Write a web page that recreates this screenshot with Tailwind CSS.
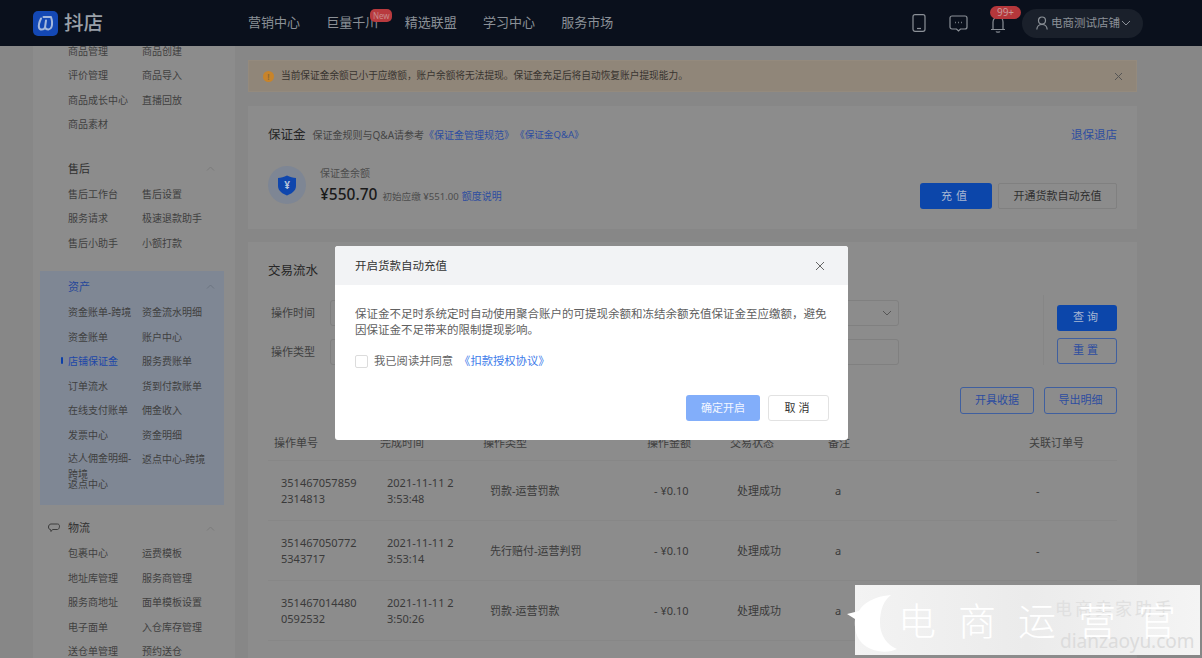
<!DOCTYPE html>
<html lang="zh-CN">
<head>
  <meta charset="UTF-8">
  <title>抖店 - 保证金</title>
  <script src="https://cdn.jsdelivr.net/npm/@tailwindcss/browser@4"></script>
</head>
<body class="relative w-[1202px] h-[658px] overflow-hidden bg-[#878787] text-[#363636]" style="font-family: 'Noto Sans', 'Noto Sans CJK SC', sans-serif;">

  <!-- top nav -->
  <header class="h-[46px] bg-[#0a101c] flex items-center pl-[33px] pr-[59px] text-[#8b9097]">
    <div class="w-[215px] flex items-center gap-[6px]">
      <svg class="w-[25px] h-[25px]" viewBox="0 0 25 25" fill="none">
        <rect width="25" height="25" rx="5" fill="#1448b4"/>
        <path d="M8 7.500C6.500 10.500 5.500 14 6 16.500C6.500 19 10.500 19.500 12 16.500C13.500 19.500 17.500 19 18.500 16C19.500 13 19 9 18 6H10.500M12 16.500L13 9.500" stroke="#a4b8dc" stroke-width="2" stroke-linecap="round" stroke-linejoin="round"/>
      </svg>
      <span class="text-[19.500px] leading-none font-medium text-[#9aa0a8]">抖店</span>
    </div>
    <nav class="flex gap-[26.300px] text-[13px]">
      <a>营销中心</a>
      <a class="relative">巨量千川
        <span class="absolute left-[44px] top-[-4px] w-[22px] h-[13px] rounded-[5px] bg-[#b83a3e] text-[8px] leading-[13px] text-center text-[#c98b8b]">New</span>
      </a>
      <a>精选联盟</a>
      <a>学习中心</a>
      <a>服务市场</a>
    </nav>
    <div class="ml-auto flex items-center">
      <svg class="w-[14px] h-[18px]" viewBox="0 0 14 18" fill="none" stroke="#8b9097" stroke-width="1.200">
        <rect x="1" y="0.700" width="12" height="16.600" rx="2"/>
        <path d="M5 14.500H9"/>
      </svg>
      <svg class="ml-[23px] w-[19px] h-[17px]" viewBox="0 0 19 17" fill="none" stroke="#8b9097" stroke-width="1.200">
        <path d="M3 1H16C17.100 1 18 1.900 18 3V12C18 13.100 17.100 14 16 14H11.500L9.500 16L7.500 14H3C1.900 14 1 13.100 1 12V3C1 1.900 1.900 1 3 1Z"/>
        <path d="M6 7.500H6.800M9.100 7.500H9.900M12.200 7.500H13" stroke-width="1.500"/>
      </svg>
      <div class="relative ml-[22px] w-[16px] h-[17px] mt-[3px]">
        <svg class="w-[16px] h-[17px]" viewBox="0 0 16 17" fill="none" stroke="#8b9097" stroke-width="1.200">
          <path d="M1 13.500H15M3 13.500V6C3 3.200 5.200 1 8 1S13 3.200 13 6V13.500M6 15.500C6.500 16.300 9.500 16.300 10 15.500"/>
        </svg>
        <span class="absolute left-0 top-[-10px] w-[31px] h-[13px] rounded-full bg-[#b5373b] text-[10px] leading-[13px] text-center text-[#c99a9a]">99+</span>
      </div>
      <div class="ml-[16px] w-[121px] h-[29px] rounded-full bg-[#1a202b] flex items-center pl-[14px]">
        <svg class="w-[12px] h-[14px]" viewBox="0 0 12 14" fill="none" stroke="#8b9097" stroke-width="1.200">
          <circle cx="6" cy="4.500" r="3.500"/>
          <path d="M0.800 13.500C1 10.500 3 8.500 6 8.500S11 10.500 11.200 13.500"/>
        </svg>
        <span class="ml-[3px] text-[11.500px] leading-none whitespace-nowrap">电商测试店铺</span>
        <svg class="ml-[1px] w-[10px] h-[6px]" viewBox="0 0 10 6" fill="none" stroke="#8b9097"><path d="M1 1L5 5L9 1"/></svg>
      </div>
    </div>
  </header>

  <div class="flex h-[612px] overflow-hidden pl-[33px]">

    <!-- sidebar, scrolled part way down -->
    <aside class="w-[202px] bg-[#8c8c8c] overflow-hidden text-[10px] text-[#404040] shrink-0">
      <div class="mt-[-7.250px] pl-[35px] grid grid-cols-[74px_1fr] auto-rows-[24.500px] items-center">
        <a>商品管理</a><a>商品创建</a>
        <a>评价管理</a><a>商品导入</a>
        <a>商品成长中心</a><a>直播回放</a>
        <a>商品素材</a><a></a>
      </div>

      <div class="mt-[19px] pl-[35px] pr-[20px] h-[26px] flex items-center justify-between text-[11px] text-[#303030]">
        <span>售后</span>
        <svg class="w-[9px] h-[5px]" viewBox="0 0 9 5" fill="none" stroke="#7a7a7a"><path d="M1 4.500L4.500 1L8 4.500"/></svg>
      </div>
      <div class="pl-[35px] grid grid-cols-[74px_1fr] auto-rows-[24.500px] items-center">
        <a>售后工作台</a><a>售后设置</a>
        <a>服务请求</a><a>极速退款助手</a>
        <a>售后小助手</a><a>小额打款</a>
      </div>

      <section class="mt-[16px] ml-[7px] w-[184px] h-[234px] bg-[#7f8794] pt-[2px] pl-[28px]">
        <div class="h-[27px] pr-[9px] flex items-center justify-between text-[11px] text-[#27479a]">
          <span>资产</span>
          <svg class="w-[9px] h-[5px]" viewBox="0 0 9 5" fill="none" stroke="#6d7480"><path d="M1 4.500L4.500 1L8 4.500"/></svg>
        </div>
        <div class="grid grid-cols-[74px_1fr] auto-rows-[24.500px] items-center">
          <a>资金账单-跨境</a><a>资金流水明细</a>
          <a>资金账单</a><a>账户中心</a>
          <a class="relative text-[#1c46a8]"><span class="absolute left-[-7px] top-[3px] w-[2px] h-[7px] rounded-full bg-[#0c3fa8]"></span>店铺保证金</a><a>服务费账单</a>
          <a>订单流水</a><a>货到付款账单</a>
          <a>在线支付账单</a><a>佣金收入</a>
          <a>发票中心</a><a>资金明细</a>
          <a class="self-start pt-[4px] leading-[15.500px] w-[66px]">达人佣金明细-跨境</a><a>返点中心-跨境</a>
          <a>返点中心</a><a></a>
        </div>
      </section>

      <div class="mt-[10px] pl-[15px] pr-[20px] h-[26px] flex items-center justify-between text-[11px] text-[#303030]">
        <span class="flex items-center gap-[8px]">
          <svg class="w-[12px] h-[10px]" viewBox="0 0 12 10" fill="none" stroke="#3c3c3c"><path d="M3 1H9.500C10.800 1 11.500 2 11.500 3.200C11.500 4.500 10.800 6.500 9.500 6.500H4.500L3 8.500L2.600 6.500C1.200 6.500 0.500 5.500 0.500 4C0.500 2.500 1.500 1 3 1Z"/></svg>
          物流
        </span>
        <svg class="w-[9px] h-[5px]" viewBox="0 0 9 5" fill="none" stroke="#7a7a7a"><path d="M1 4.500L4.500 1L8 4.500"/></svg>
      </div>
      <div class="pl-[35px] grid grid-cols-[74px_1fr] auto-rows-[24.500px] items-center">
        <a>包裹中心</a><a>运费模板</a>
        <a>地址库管理</a><a>服务商管理</a>
        <a>服务商地址</a><a>面单模板设置</a>
        <a>电子面单</a><a>入仓库存管理</a>
        <a>送仓单管理</a><a>预约送仓</a>
      </div>
    </aside>

    <main class="ml-[13px] w-[889px] shrink-0">
      <!-- warning -->
      <div class="mt-[14px] h-[32px] px-[14px] bg-[#908679] border border-[#948a7d] flex items-center text-[9.700px] text-[#383430]">
        <span class="w-[11px] h-[11px] rounded-full bg-[#c8842a] text-[#8f6a36] text-[8px] leading-[11px] text-center font-bold">!</span>
        <span class="ml-[7px]">当前保证金余额已小于应缴额，账户余额将无法提现。保证金充足后将自动恢复账户提现能力。</span>
        <svg class="ml-auto mr-[-1px] w-[9px] h-[9px]" viewBox="0 0 9 9" stroke="#555" stroke-width="1"><path d="M1 1L8 8M8 1L1 8"/></svg>
      </div>

      <!-- deposit card -->
      <section class="mt-[14px] h-[123px] bg-[#8c8c8c] px-[20px] pt-[21px]">
        <div class="h-[16px] flex items-center">
          <h2 class="text-[12.500px] text-[#262626]">保证金</h2>
          <span class="ml-[7px] text-[10px] text-[#454545]">保证金规则与Q&amp;A请参考</span>
          <a class="text-[10px] text-[#2c4da0]">《保证金管理规范》</a>
          <a class="ml-[1px] text-[9.600px] text-[#2c4da0]">《保证金Q&amp;A》</a>
          <a class="ml-auto text-[11.500px] text-[#2c4da0]">退保退店</a>
        </div>
        <div class="mt-[23px] h-[43px] flex">
          <div class="w-[38px] h-[38px] rounded-full bg-[#7e8694] flex items-center justify-center">
            <div class="relative w-[20px] h-[21px]">
              <svg class="w-[20px] h-[21px]" viewBox="0 0 20 21"><path d="M1 3C4 3 7 2 10 0.500C13 2 16 3 19 3V11C19 16 14 19 10 20.500C6 19 1 16 1 11Z" fill="#0f46ad"/></svg>
              <span class="absolute inset-0 flex items-center justify-center text-[10px] font-bold text-[#b6c3db]">¥</span>
            </div>
          </div>
          <div class="ml-[14px]">
            <p class="text-[10px] leading-[14px] text-[#4d4d4d]">保证金余额</p>
            <p class="mt-[2px] flex items-baseline leading-[24px]">
              <span class="text-[15.500px] font-medium text-[#1a1a1a]">¥550.70</span>
              <span class="ml-[5px] text-[9.600px] text-[#4d4d4d]">初始应缴 ¥551.00</span>
              <a class="ml-[3px] text-[10px] text-[#2c4da0]">额度说明</a>
            </p>
          </div>
          <div class="ml-auto self-end flex gap-[6px]">
            <button class="w-[72px] h-[26px] rounded-[3px] bg-[#0c46aa] text-[11px] tracking-[4px] text-[#a8b7d3]">充值</button>
            <button class="w-[119px] h-[26px] rounded-[2px] border border-[#808080] text-[11px] text-[#303030]">开通货款自动充值</button>
          </div>
        </div>
      </section>

      <!-- transactions card -->
      <section class="mt-[13px] h-[430px] bg-[#8c8c8c] px-[20px] pt-[21px] overflow-hidden">
        <h2 class="text-[12.500px] leading-[16px] text-[#262626]">交易流水</h2>

        <div class="mt-[21px] flex h-[65px]">
          <div class="w-[631px] pl-[3px] text-[11px] text-[#404040]">
            <div class="h-[26px] flex items-center">
              <label class="w-[59px]">操作时间</label>
              <div class="flex-1 h-[26px] rounded-[3px] border border-[#808080] flex items-center justify-end pr-[6px]">
                <svg class="w-[10px] h-[6px]" viewBox="0 0 10 6" fill="none" stroke="#555"><path d="M1 1L5 5L9 1"/></svg>
              </div>
            </div>
            <div class="mt-[13px] h-[26px] flex items-center">
              <label class="w-[59px]">操作类型</label>
              <div class="flex-1 h-[26px] rounded-[3px] border border-[#808080]"></div>
            </div>
          </div>
          <div class="ml-auto mt-[-5px] h-[70px] border-l border-[#868686] pl-[13px] pt-[9.500px]">
            <button class="block w-[60px] h-[26px] rounded-[3px] bg-[#0c46aa] text-[11px] tracking-[3px] text-[#a8b7d3]">查询</button>
            <button class="block mt-[7px] w-[60px] h-[26px] rounded-[3px] border border-[#3f5f9f] text-[11px] tracking-[3px] text-[#2c4da0]">重置</button>
          </div>
        </div>

        <div class="mt-[22px] flex justify-end gap-[10px]">
          <button class="w-[74px] h-[27px] rounded-[3px] border border-[#3f5f9f] text-[11px] text-[#2c4da0]">开具收据</button>
          <button class="w-[73px] h-[27px] rounded-[3px] border border-[#3f5f9f] text-[11px] text-[#2c4da0]">导出明细</button>
        </div>

        <div class="mt-[21px] pb-[9px] border-b border-[#878787] pl-[6px] grid grid-cols-[106px_103px_164px_83px_98px_201px_1fr] text-[11px] leading-[16px] text-[#404040]">
          <span>操作单号</span><span>完成时间</span><span>操作类型</span><span>操作金额</span><span>交易状态</span><span>备注</span><span>关联订单号</span>
        </div>

        <div class="h-[60px] border-b border-[#878787] pl-[13px] grid grid-cols-[106px_103px_164px_83px_98px_201px_1fr] items-center text-[11px] leading-[16px] text-[#3a3a3a]">
          <span class="w-[80px] break-all">3514670578592314813</span><span class="w-[72px] break-all">2021-11-11 23:53:48</span><span>罚款-运营罚款</span><span>- ¥0.10</span><span>处理成功</span><span>a</span><span>-</span>
        </div>
        <div class="h-[60px] border-b border-[#878787] pl-[13px] grid grid-cols-[106px_103px_164px_83px_98px_201px_1fr] items-center text-[11px] leading-[16px] text-[#3a3a3a]">
          <span class="w-[80px] break-all">3514670507725343717</span><span class="w-[72px] break-all">2021-11-11 23:53:14</span><span>先行赔付-运营判罚</span><span>- ¥0.10</span><span>处理成功</span><span>a</span><span>-</span>
        </div>
        <div class="h-[60px] border-b border-[#878787] pl-[13px] grid grid-cols-[106px_103px_164px_83px_98px_201px_1fr] items-center text-[11px] leading-[16px] text-[#3a3a3a]">
          <span class="w-[80px] break-all">3514670144800592532</span><span class="w-[72px] break-all">2021-11-11 23:50:26</span><span>罚款-运营罚款</span><span>- ¥0.10</span><span>处理成功</span><span>a</span><span>-</span>
        </div>
      </section>
    </main>
  </div>

  <!-- dialog -->
  <div class="absolute left-[335px] top-[246px] w-[513px] h-[194px] bg-white rounded-[3px] overflow-hidden">
    <div class="h-[39px] bg-[#f2f3f5] pl-[20px] pr-[23px] flex items-center justify-between">
      <h3 class="text-[11.500px] text-[#333]">开启货款自动充值</h3>
      <svg class="w-[10px] h-[10px]" viewBox="0 0 10 10" stroke="#666" stroke-width="1"><path d="M1 1L9 9M9 1L1 9"/></svg>
    </div>
    <div class="pl-[20px] pr-[19px] pt-[21px]">
      <p class="text-[11.500px] leading-[16px] text-[#606060]">保证金不足时系统定时自动使用聚合账户的可提现余额和冻结余额充值保证金至应缴额，避免因保证金不足带来的限制提现影响。</p>
      <div class="mt-[16px] h-[14px] flex items-center text-[11.300px] text-[#666]">
        <span class="w-[13px] h-[13px] rounded-[2px] border border-[#dcdcdc] bg-white"></span>
        <span class="ml-[6px]">我已阅读并同意</span>
        <a class="ml-[6px] text-[#3d7bea]">《扣款授权协议》</a>
      </div>
      <div class="mt-[27px] flex justify-end gap-[8px]">
        <button class="w-[74px] h-[26px] rounded-[3px] bg-[#82aefa] text-[11px] text-[#f2f6ff]">确定开启</button>
        <button class="w-[61px] h-[26px] rounded-[3px] border border-[#e2e2e2] text-[11px] tracking-[3px] text-[#333]">取消</button>
      </div>
    </div>
  </div>

  <!-- watermark -->
  <div class="absolute left-[855px] top-[585px] w-[345px] h-[70px] bg-gradient-to-r from-[#f3f3f3] via-[#ebebeb] to-[#f4f4f4] overflow-hidden">
    <span class="absolute left-[200px] top-[12px] text-[17px] leading-[24px] tracking-[3px] text-[#e0e0e0] whitespace-nowrap">电商卖家助手</span>
    <span class="absolute left-[205px] top-[44px] text-[19px] leading-[24px] text-[#dcdcdc] whitespace-nowrap">dianzaoyu.com</span>
    <div class="absolute left-[43px] top-[4px] flex gap-[22px] text-[38px] leading-[62px] font-light text-white whitespace-nowrap">
      <span>电</span><span>商</span><span>运</span><span>营</span><span>官</span>
    </div>
  </div>
  <svg class="absolute left-[847px] top-[595px] w-[52px] h-[58px]" viewBox="0 0 52 58">
    <path d="M44 0C28 1 16 8 12 16L0 19L8 24C7 36 10 48 24 54C34 58 44 57 50 54C40 50 33 40 33 28C33 16 36 6 44 0Z" fill="#fff"/>
  </svg>

</body>
</html>
